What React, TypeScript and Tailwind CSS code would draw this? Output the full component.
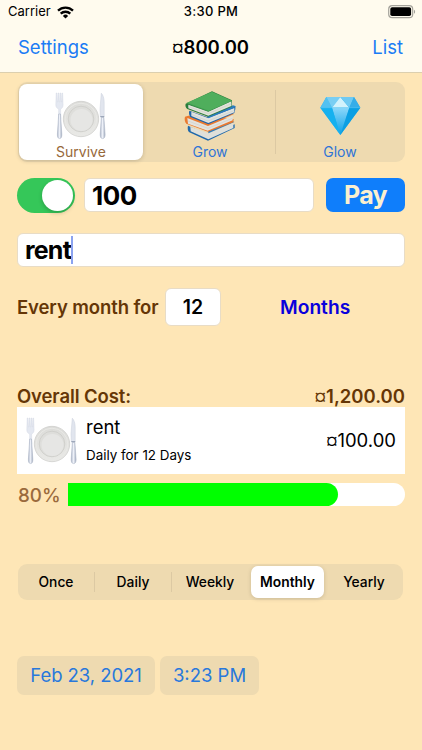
import { useState } from "react";

const PlateIcon = () => (
  <svg width="52" height="48" viewBox="0 0 52 48" className="shrink-0">
    <defs>
      <linearGradient id="silver" x1="0" x2="1" y1="0" y2="0">
        <stop offset="0" stopColor="#a9b2c4" />
        <stop offset="0.45" stopColor="#f0f3fa" />
        <stop offset="1" stopColor="#a4aec0" />
      </linearGradient>
      <linearGradient id="rim" x1="0" x2="0" y1="0" y2="1">
        <stop offset="0" stopColor="#dcdcd9" />
        <stop offset="1" stopColor="#e9e9e6" />
      </linearGradient>
    </defs>
    {/* fork */}
    <path
      d="M1.2 1h.8l.4 9h.5L3.200 1h.8l.3 9h.5L5.200 1h.8l.4 9h.4L7 1h.6l.5 12c0 2.500-1.700 3.600-2.500 4.200l.2 10H3.500l.2-10C2.500 16.500.8 15.500.8 13z"
      fill="#e4e8f1"
      stroke="#cfd5e1"
      strokeWidth="0.4"
    />
    <path d="M3.700 22h1.800l1.300 20c.2 3-.7 4.600-2.200 4.600S2.200 45 2.400 42z" fill="url(#silver)" stroke="#a5aec0" strokeWidth="0.5" />
    {/* plate */}
    <circle cx="26" cy="27" r="17.700" fill="url(#rim)" stroke="#cbccc9" strokeWidth="0.7" />
    <circle cx="26" cy="27" r="15.800" fill="none" stroke="#e9e9e6" strokeWidth="1" />
    <circle cx="26" cy="27" r="12.800" fill="#dededb" stroke="#cacac6" strokeWidth="0.7" />
    <circle cx="26.500" cy="28" r="11" fill="#e6e6e4" />
    {/* knife */}
    <path d="M46.300 1.200c1.800 1.800 2.900 5 2.900 9.500v14h-3.900l-.3-8z" fill="#e1e5ee" stroke="#c8cfdb" strokeWidth="0.5" />
    <path d="M46.300 25.500h2.600l1.200 16.500c.2 3-.8 4.600-2.500 4.600s-2.600-1.600-2.400-4.600z" fill="url(#silver)" stroke="#a5aec0" strokeWidth="0.500" />
    <path d="M45.300 24.700h3.900" stroke="#8f9aaf" strokeWidth="1" />
  </svg>
);

const BooksIcon = () => (
  <svg width="52" height="50" viewBox="105 40 156 150" className="shrink-0">
    {/* bottom blue book */}
    <path d="M117 144l60 27 80-31v11l-80 38-56-25c-5-4-6-13-4-20z" fill="#1f68ab" />
    <path d="M124 147l54 20 75-31v15l-75 34-53-24z" fill="#dfe0da" />
    <path d="M178 160l70-31 8 4-78 34z" fill="#2c7cbd" />
    {/* orange book */}
    <path d="M108 117l10-3 136 10-1 10-76 28-65-24c-5-5-6-15-4-21z" fill="#ea7a30" />
    <path d="M115 121l62 24 74-31v14l-75 31-59-21z" fill="#e4e3dd" />
    <path d="M117 130l60 22 73-30" fill="none" stroke="#c9cac4" strokeWidth="1.500" />
    <path d="M172 138l76-32 7 3-78 34z" fill="#ea7a30" />
    {/* upper blue book */}
    <path d="M121 99l56 20 82-34v9l-3 12-78 34-54-22c-4-6-5-13-3-19z" fill="#1f65a9" />
    <path d="M127 102l50 19 79-30v13l-78 32-51-21z" fill="#e0e3df" />
    <path d="M129 111l48 19 78-31" fill="none" stroke="#c4c9c7" strokeWidth="1.500" />
    <path d="M174 115l78-32 7 2v4l-81 33z" fill="#2c7cbd" />
    {/* green book */}
    <path d="M110 78l79-37 60 27-1 19-71 30-62-23c-5-3-7-10-5-16z" fill="#287c3c" />
    <path d="M118 81l60 21 69-31v14l-69 29-60-22z" fill="#e2e3da" />
    <path d="M118 87l60 21 69-30" fill="none" stroke="#c6c9c0" strokeWidth="1.500" />
    <path d="M112 76l77-34 60 27-71 32z" fill="#4fae5c" />
    <path d="M116 77l62 23" stroke="#3c9a4c" strokeWidth="2" />
  </svg>
);

const DiamondIcon = () => (
  <svg width="41" height="40" viewBox="135 55 123 120" className="shrink-0">
    <defs>
      <linearGradient id="gem" x1="0" x2="0" y1="0" y2="1">
        <stop offset="0" stopColor="#8cd7fa" />
        <stop offset="1" stopColor="#08a1e8" />
      </linearGradient>
    </defs>
    <path d="M154 58h83l19 32-60 82-60-82z" fill="#27b3ef" />
    <path d="M154 58l17 32h-35z" fill="#52c1f1" />
    <path d="M154 58h42l-25 32z" fill="#79cef3" />
    <path d="M196 58l27 32h-52z" fill="#d2f2fc" />
    <path d="M196 58h41l-14 32z" fill="#70caf2" />
    <path d="M237 58l19 32h-33z" fill="#36ade8" />
    <path d="M171 90h52l-27 82z" fill="url(#gem)" />
    <path d="M136 90h35l25 82z" fill="#16b1ef" />
    <path d="M256 90h-33l-27 82z" fill="#0b9fe3" />
    <path d="M137 90h118" stroke="#66cbf5" strokeWidth="1.500" />
  </svg>
);

const WifiIcon = () => (
  <svg width="17" height="13" viewBox="0 0 17 13" fill="none" stroke="black" strokeWidth="2.300">
    <path d="M1 4.700a10.800 10.800 0 0 1 15 0" />
    <path d="M3.700 7.700a6.900 6.900 0 0 1 9.600 0" />
    <path d="M8.500 12.500L5.900 9.900a3.700 3.700 0 0 1 5.200 0z" fill="black" stroke="none" />
  </svg>
);

const BatteryIcon = () => (
  <svg width="28" height="14" viewBox="0 0 28 14">
    <rect x="0.700" y="0.700" width="24" height="12" rx="3.500" fill="none" stroke="#a5a39b" strokeWidth="1.200" />
    <rect x="2.300" y="2.300" width="20.800" height="8.800" rx="1.800" fill="black" />
    <path d="M26 4.800c1.500.6 1.500 3.400 0 4z" fill="#a5a39b" />
  </svg>
);

const Money = ({ amount }: { amount: string }) => (
  <span>
    <span className="align-[1px] text-[0.84em] leading-none">¤</span>
    {amount}
  </span>
);

const categories = [
  { name: "Survive", icon: <PlateIcon /> },
  { name: "Grow", icon: <BooksIcon /> },
  { name: "Glow", icon: <DiamondIcon /> },
];

const periods = ["Once", "Daily", "Weekly", "Monthly", "Yearly"];

const App = () => {
  const [category, setCategory] = useState("Survive");
  const [period, setPeriod] = useState("Monthly");
  const [enabled, setEnabled] = useState(true);
  const progress = 80;

  return (
    <div className="h-[750px] w-[422px] overflow-hidden bg-[#fee6b6] font-[Inter,sans-serif] text-black">
      <header className="h-[73px] border-b border-[#dccfae] bg-[#fffbee]">
        <div className="grid h-6 grid-cols-3 items-center pl-2 pr-[6px] text-[13px]">
          <div className="flex items-center gap-[6px]">
            <span>Carrier</span>
            <WifiIcon />
          </div>
          <span className="pr-[2px] text-center font-medium tracking-[0.3px]">3:30 PM</span>
          <div className="flex justify-end">
            <BatteryIcon />
          </div>
        </div>
        <div className="grid h-[48px] grid-cols-3 items-center pl-[18px] pr-[19px] text-[18.500px]">
          <button className="text-left text-[#1a7cf5]">Settings</button>
          <h1 className="text-center font-semibold">
            <Money amount="800.00" />
          </h1>
          <button className="text-right text-[#1a7cf5]">List</button>
        </div>
      </header>

      <main className="pl-[17px] pr-[17px]">
        <div className="ml-px mt-[9px] flex h-20 rounded-[9px] bg-[#eedab0] py-[2px] pl-px">
          {categories.map((item, index) => (
            <button
              key={item.name}
              onClick={() => setCategory(item.name)}
              className={`relative flex flex-col items-center justify-end rounded-[8px] text-[14px] leading-[16px] ${
                index === 0 ? "mr-[2px] w-[124px]" : "flex-1"
              } ${
                category === item.name
                  ? "bg-white text-[#96683a] shadow-[0_1px_4px_rgba(0,0,0,0.18)]"
                  : "text-[#2f75d6]"
              }`}
            >
              <span className="flex h-[58px] items-center justify-center pt-[2px]">{item.icon}</span>
              {item.name}
              {index === 2 && <span className="absolute left-0 top-[6px] h-16 w-px bg-[#dcc9a3]" />}
            </button>
          ))}
        </div>

        <div className="mt-4 flex h-[34px] items-center">
          <button
            onClick={() => setEnabled(!enabled)}
            className={`flex h-[35px] w-[58px] items-center rounded-full p-[2px] ${
              enabled ? "justify-end bg-[#35c759]" : "justify-start bg-[#e0d3b5]"
            }`}
          >
            <span className="size-[31px] rounded-full bg-white shadow-[0_2px_4px_rgba(0,0,0,0.2)]" />
          </button>
          <div className="ml-[9px] flex h-[34px] w-[230px] items-center rounded-[6px] border border-[#e8dcc6] bg-white pl-[7px] text-[26px] font-bold tracking-[-0.5px]">
            100
          </div>
          <button className="ml-3 h-[34px] w-[79px] rounded-[7px] bg-[#0f7efb] text-[25px] font-bold leading-[34px] tracking-[-0.7px] text-[#fbf0cf]">
            Pay
          </button>
        </div>

        <div className="mt-[21px] flex h-[34px] items-center rounded-[6px] border border-[#e8dcc6] bg-white pl-[7px] text-[25px] font-bold">
          <span className="pt-[2px] tracking-[-0.8px]">rent</span>
          <span className="h-7 w-[2px] bg-[#8ba3f0]" />
        </div>

        <div className="mt-[21px] flex h-[38px] items-center text-[19.500px] font-semibold">
          <span className="w-[148px] whitespace-nowrap pt-[2px] text-[18.500px] tracking-[-0.1px] text-[#653606]">
            Every month for
          </span>
          <div className="flex h-[38px] w-[56px] items-center justify-center rounded-[6px] border border-[#e8dcc6] bg-white pt-px">
            12
          </div>
          <span className="ml-[59px] text-[19.200px] text-[#0a00dc]">Months</span>
        </div>

        <div className="mt-[60px] flex h-[21px] items-center justify-between pt-px text-[18.500px] font-semibold text-[#653606]">
          <span className="tracking-[-0.1px]">Overall Cost:</span>
          <Money amount="1,200.00" />
        </div>

        <div className="flex h-[67px] items-center bg-white pl-[9px] pr-[9px]">
          <PlateIcon />
          <div className="ml-2 flex flex-col pb-[2px]">
            <span className="text-[18.500px] leading-[26px]">rent</span>
            <span className="mt-[5px] text-[13.400px] leading-5">Daily for 12 Days</span>
          </div>
          <span className="ml-auto text-[18.500px]">
            <Money amount="100.00" />
          </span>
        </div>

        <div className="mt-[9px] flex h-[23px] items-center">
          <span className="w-[51px] pl-px pt-[3px] text-[18.800px] font-medium text-[#9a6a3c]">{progress}%</span>
          <div className="h-[23px] flex-1 overflow-hidden rounded-r-full bg-white">
            <div className="h-full rounded-r-full bg-[#00ff00]" style={{ width: `${progress}%` }} />
          </div>
        </div>

        <div className="ml-px mr-[2px] mt-[58px] flex h-9 rounded-[9px] bg-[#eedab0] py-[2px]">
          {periods.map((name, index) => (
            <button
              key={name}
              onClick={() => setPeriod(name)}
              className={`relative rounded-[7px] text-[13.800px] ${
                period === name
                  ? "mx-[2px] w-[73px] bg-white font-semibold shadow-[0_1px_4px_rgba(0,0,0,0.15)]"
                  : "w-[77px] pr-px font-medium"
              }`}
            >
              {name}
              {(index === 1 || index === 2) && (
                <span className="absolute -left-px top-[6px] h-5 w-px bg-[#dcc9a3]" />
              )}
            </button>
          ))}
        </div>

        <div className="mt-14 flex gap-[5px] text-[18.500px] text-[#2878dc]">
          <button className="h-[39px] w-[138px] whitespace-nowrap rounded-[7px] bg-[#eedab0] tracking-[-0.05px]">
            Feb 23, 2021
          </button>
          <button className="h-[39px] w-[99px] whitespace-nowrap rounded-[7px] bg-[#eedab0]">3:23 PM</button>
        </div>
      </main>
    </div>
  );
};

export default App;
